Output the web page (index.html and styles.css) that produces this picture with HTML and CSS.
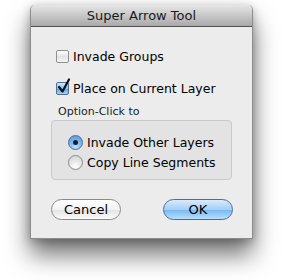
FILE: index.html
```html
<!DOCTYPE html>
<html lang="en">
<head>
  <meta charset="UTF-8" />
  <title>Super Arrow Tool</title>
  <link rel="stylesheet" href="styles.css">
</head>
<body>
  <div class="window">
    <div class="titlebar">Super Arrow Tool</div>
    <div class="content">
      <label class="check-row first">
        <span class="checkbox"></span>
        <span>Invade Groups</span>
      </label>
      <label class="check-row second">
        <span class="checkbox checked">
          <svg width="16" height="17" viewBox="0 0 16 17">
            <path d="M3 9 L6.5 13.5 L13 1.5" fill="none" stroke="#111" stroke-width="2.2" stroke-linecap="round" stroke-linejoin="round"/>
          </svg>
        </span>
        <span>Place on Current Layer</span>
      </label>
      <div class="group-label">Option-Click to</div>
      <div class="group">
        <label class="radio-row">
          <span class="radio selected"></span>
          <span>Invade Other Layers</span>
        </label>
        <label class="radio-row">
          <span class="radio"></span>
          <span>Copy Line Segments</span>
        </label>
      </div>
      <div class="buttons">
        <button class="btn">Cancel</button>
        <button class="btn default">OK</button>
      </div>
    </div>
  </div>
</body>
</html>
```

FILE: styles.css
```css
* {
  box-sizing: border-box;
}
html, body {
  height: 100%;
}
body {
  margin: 0;
  background: #fff;
  font-family: "Lucida Grande", "DejaVu Sans", sans-serif;
  font-size: 12.5px;
  color: #000;
  overflow: hidden;
}
.window {
  margin: 5px 0 0 30px;
  width: 223px;
  height: 234px;
  background: #ececec;
  border: 1px solid #8c8c8c;
  border-top: none;
  border-radius: 5px 5px 0 0;
  box-shadow: 0 16px 24px rgba(0, 0, 0, 0.55), 0 2px 10px rgba(0, 0, 0, 0.25);
}
.titlebar {
  height: 22px;
  line-height: 21px;
  font-size: 13px;
  text-align: center;
  background: linear-gradient(#e6e6e6, #a9a9a9);
  border-bottom: 1px solid #505050;
  border-radius: 5px 5px 0 0;
  color: #1a1a1a;
}
.content {
  padding: 0 19px 0 19px;
}
.check-row {
  display: flex;
  align-items: center;
  gap: 4px;
  height: 16px;
  margin-left: 6px;
}
.check-row.first {
  margin-top: 21px;
}
.check-row.second {
  margin-top: 16px;
}
.checkbox {
  position: relative;
  width: 13px;
  height: 13px;
  border: 1px solid #8f8f8f;
  border-radius: 2px;
  background: linear-gradient(#ffffff, #e4e4e4 50%, #f4f4f4);
}
.checkbox.checked {
  border-color: #4f6f99;
  background: linear-gradient(#d3e7fb, #8dc0f1 50%, #5ea4ea 55%, #a8d2fa);
}
.checkbox svg {
  position: absolute;
  left: -1px;
  top: -5px;
}
.group-label {
  font-size: 11px;
  margin: 9px 0 2px 8px;
  color: #222;
}
.group {
  margin-left: 1px;
  width: 181px;
  height: 60px;
  border: 1px solid #c9c9c9;
  border-radius: 4px;
  background: #e3e3e3;
  padding: 11px 0 0 16px;
}
.radio-row {
  display: flex;
  align-items: center;
  gap: 4px;
  height: 20px;
}
.radio {
  position: relative;
  width: 15px;
  height: 15px;
  border: 1px solid #8a8a8a;
  border-radius: 50%;
  background: radial-gradient(circle at 50% 80%, #ffffff, #dcdcdc 70%);
}
.radio.selected {
  border-color: #4c6d98;
  background: radial-gradient(circle at 50% 85%, #bfe0ff, #73b2ee 55%, #4e94dc);
}
.radio.selected::after {
  content: "";
  position: absolute;
  left: 4px;
  top: 4px;
  width: 5px;
  height: 5px;
  border-radius: 50%;
  background: #1a1a2a;
}
.buttons {
  display: flex;
  justify-content: space-between;
  margin: 19px 0 0 1px;
}
.btn {
  width: 70px;
  height: 21px;
  padding: 0;
  font-family: inherit;
  font-size: 13px;
  color: #000;
  border: 1px solid #8a8a8a;
  border-radius: 11px;
  background: linear-gradient(#ffffff, #f2f2f2 50%, #e4e4e4 55%, #fbfbfb);
}
.btn.default {
  border-color: #4d6c9c;
  background: linear-gradient(#d8ebfd, #a3cff6 50%, #7cbaf1 55%, #b7e0fd);
}
```
